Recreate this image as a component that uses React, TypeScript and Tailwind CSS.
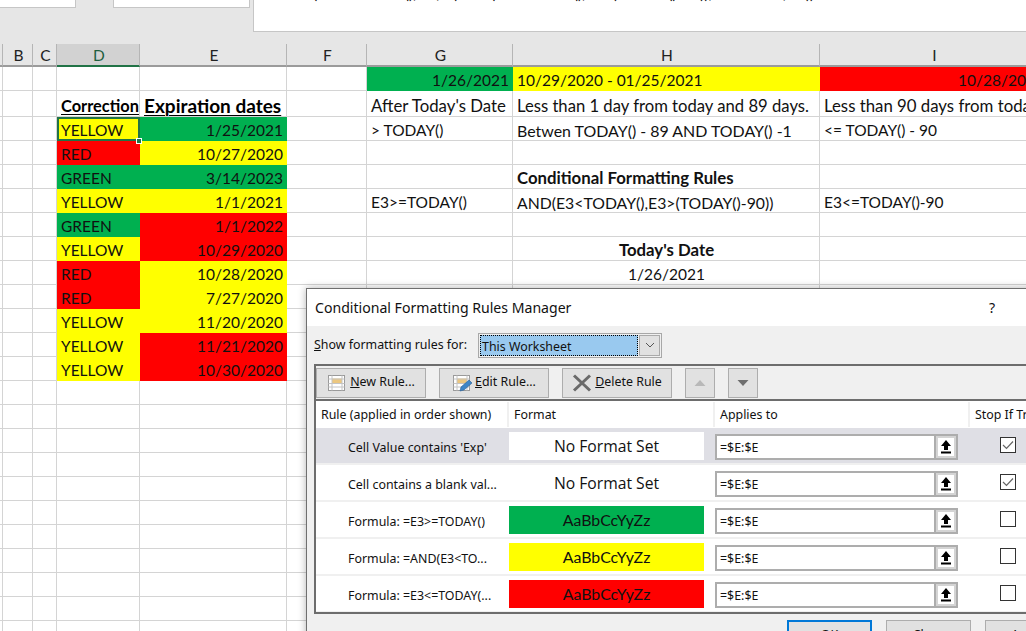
import type { ReactNode } from "react";

type Fill = "green" | "yellow" | "red" | undefined;

const fills = {
  green: "bg-[#00b050] border-transparent",
  yellow: "bg-[#ffff00] border-transparent",
  red: "bg-[#ff0000] border-transparent",
};

type CellDef = { text?: string; fill?: Fill; align?: "r" | "c"; bold?: boolean; size?: string };

// Lato runs narrower than the sheet's font on lowercase, so wordy cells get a bigger size
const wordy = "text-[16.8px]";

const sheetRows: { h: string; cells: CellDef[] }[] = [
  { h: "h-[24px]", cells: [{}, {}, { text: "1/26/2021", fill: "green", align: "r" }, { text: "10/29/2020 - 01/25/2021", fill: "yellow" }, { text: "10/28/2020", fill: "red", align: "r" }] },
  { h: "h-[26px]", cells: [{}, {}, { text: "After Today's Date", size: wordy }, { text: "Less than 1 day from today and 89 days.", size: "text-[16.65px]" }, { text: "Less than 90 days from today", size: wordy }] },
  { h: "h-[24px]", cells: [{ text: "YELLOW", fill: "yellow" }, { text: "1/25/2021", fill: "green", align: "r" }, { text: "> TODAY()" }, { text: "Betwen TODAY() - 89 AND TODAY() -1", size: "text-[15.95px]" }, { text: "<= TODAY() - 90" }] },
  { h: "h-[24px]", cells: [{ text: "RED", fill: "red" }, { text: "10/27/2020", fill: "yellow", align: "r" }, {}, {}, {}] },
  { h: "h-[24px]", cells: [{ text: "GREEN", fill: "green" }, { text: "3/14/2023", fill: "green", align: "r" }, {}, { text: "Conditional Formatting Rules", bold: true, size: wordy }, {}] },
  { h: "h-[24px]", cells: [{ text: "YELLOW", fill: "yellow" }, { text: "1/1/2021", fill: "yellow", align: "r" }, { text: "E3>=TODAY()" }, { text: "AND(E3<TODAY(),E3>(TODAY()-90))", size: "text-[15.8px]" }, { text: "E3<=TODAY()-90" }] },
  { h: "h-[24px]", cells: [{ text: "GREEN", fill: "green" }, { text: "1/1/2022", fill: "red", align: "r" }, {}, {}, {}] },
  { h: "h-[24px]", cells: [{ text: "YELLOW", fill: "yellow" }, { text: "10/29/2020", fill: "red", align: "r" }, {}, { text: "Today's Date", bold: true, align: "c", size: wordy }, {}] },
  { h: "h-[24px]", cells: [{ text: "RED", fill: "red" }, { text: "10/28/2020", fill: "yellow", align: "r" }, {}, { text: "1/26/2021", align: "c" }, {}] },
  { h: "h-[24px]", cells: [{ text: "RED", fill: "red" }, { text: "7/27/2020", fill: "yellow", align: "r" }, {}, {}, {}] },
  { h: "h-[24px]", cells: [{ text: "YELLOW", fill: "yellow" }, { text: "11/20/2020", fill: "yellow", align: "r" }, {}, {}, {}] },
  { h: "h-[24px]", cells: [{ text: "YELLOW", fill: "yellow" }, { text: "11/21/2020", fill: "red", align: "r" }, {}, {}, {}] },
  { h: "h-[24px]", cells: [{ text: "YELLOW", fill: "yellow" }, { text: "10/30/2020", fill: "red", align: "r" }, {}, {}, {}] },
  ...Array.from({ length: 11 }, () => ({ h: "h-[24px]", cells: [{}, {}, {}, {}, {}] as CellDef[] })),
];

const columnClass = "grid grid-cols-[3px_30px_24px_83px_147px_80px_146px_307px_228px] w-[1048px]";

function Head({ label, active }: { label?: string; active?: boolean }) {
  return (
    <div
      className={
        active
          ? "flex h-[23px] items-center justify-center border-b-2 border-r border-b-[#217346] border-r-[#b5b5b5] bg-[#d2d2d2] pl-[2px] pt-[2px] text-[#1f5f3f]"
          : "flex h-[23px] items-center justify-center border-b-2 border-r border-b-[#9b9b9b] border-r-[#b5b5b5] bg-[#e6e6e6] pl-[2px] pt-[2px] text-[#222]"
      }
    >
      {label}
    </div>
  );
}

function Cell({ def, h }: { def: CellDef; h: string }) {
  const pad = h === "h-[26px]" ? "pt-[6px]" : "pt-[4px]";
  const base = `flex ${h} ${pad} items-center whitespace-nowrap border-b border-r pl-[4px] pr-[3px] text-[#111] overflow-hidden`;
  const color = def.fill ? fills[def.fill] : "border-[#d4d4d4] bg-white";
  const align = def.align === "r" ? "justify-end" : def.align === "c" ? "justify-center" : "justify-start";
  return (
    <div className={`${base} ${color} ${align} ${def.bold ? "font-bold" : ""} ${def.size ?? ""}`}>
      <span>{def.text}</span>
    </div>
  );
}

function Blank({ h }: { h: string }) {
  return <div className={`${h} border-b border-r border-[#d4d4d4] bg-white`} />;
}

function Sheet() {
  return (
    <div className={`${columnClass} font-['Lato',sans-serif] text-[15.5px] leading-none`}>
      <Head />
      <Head label="B" />
      <Head label="C" />
      <Head label="D" active />
      <Head label="E" />
      <Head label="F" />
      <Head label="G" />
      <Head label="H" />
      <Head label="I" />
      {sheetRows.map((row, i) => {
        const [d, e, g, hh, ii] = row.cells;
        return (
          <div key={i} className="contents">
            <Blank h={row.h} />
            <Blank h={row.h} />
            <Blank h={row.h} />
            {i === 1 ? (
              <div className="flex h-[26px] items-end whitespace-nowrap border-b border-r border-[#d4d4d4] bg-white pb-[2px] pl-[4px] text-[16.4px] font-bold underline decoration-1 underline-offset-2">
                Correction
              </div>
            ) : i === 2 ? (
              <div className="relative h-[24px]">
                <div className="flex h-full items-center border-2 border-[#217346] bg-[#ffff00] px-[2px] pt-[3px] text-[#111]">
                  {d.text}
                </div>
                <div className="absolute bottom-[-3px] right-[-2px] h-[6px] w-[6px] border border-white bg-[#217346]" />
              </div>
            ) : (
              <Cell def={d} h={row.h} />
            )}
            {i === 1 ? (
              <div className="flex h-[26px] items-end whitespace-nowrap border-b border-r border-[#d4d4d4] bg-white pb-[1px] pl-[4px] text-[19px] font-bold underline decoration-1 underline-offset-2">
                Expiration dates
              </div>
            ) : (
              <Cell def={e} h={row.h} />
            )}
            <Blank h={row.h} />
            <Cell def={g} h={row.h} />
            <Cell def={hh} h={row.h} />
            <Cell def={ii} h={row.h} />
          </div>
        );
      })}
    </div>
  );
}

function TableIcon({ pencil }: { pencil?: boolean }) {
  return (
    <svg width="20" height="20" viewBox="0 0 20 20" className="shrink-0">
      <rect x="1.5" y="2.5" width="16" height="15" fill="#fff" stroke="#9a9a9a" />
      <rect x="5" y="5.5" width="10" height="5" fill="#ecc77f" />
      <path d="M1.5 6h16M1.5 10.5h16M1.5 14h16M5 2.5v15M15 2.5v15" stroke="#c4c4c4" fill="none" />
      {pencil && <path d="M8 18l1-4 8-7 3 3-8 7z" fill="#3f86c6" stroke="#2a5f95" strokeWidth="0.6" />}
    </svg>
  );
}

function ToolButton({ icon, children, w }: { icon: ReactNode; children: ReactNode; w: string }) {
  return (
    <button className={`flex h-[30px] ${w} items-center justify-center gap-[3px] border border-[#adadad] bg-[#e1e1e1] text-[12.4px] text-[#111]`}>
      {icon}
      <span>{children}</span>
    </button>
  );
}

function ArrowButton({ up }: { up?: boolean }) {
  return (
    <button className="flex h-[30px] w-[30px] items-center justify-center border border-[#adadad] bg-[#e1e1e1]">
      <svg width="12" height="8" viewBox="0 0 12 8">
        {up ? <path d="M6 1l5.5 6H.5z" fill="#b8b8b8" /> : <path d="M.5 1h11L6 7z" fill="#6e6e6e" />}
      </svg>
    </button>
  );
}

function UploadIcon() {
  return (
    <svg width="12" height="14" viewBox="0 0 12 14">
      <path d="M6 0l5 6H8v4H4V6H1z" fill="#000" />
      <rect x="1" y="11.5" width="10" height="2" fill="#000" />
    </svg>
  );
}

type Rule = { label: string; sample: string; fill?: string; text: string; checked: boolean; selected?: boolean };

const rules: Rule[] = [
  { label: "Cell Value contains 'Exp'", sample: "No Format Set", checked: true, selected: true, text: "pt-[2px] font-['Open_Sans',sans-serif] text-[15.7px]", fill: "bg-white" },
  { label: "Cell contains a blank val...", sample: "No Format Set", checked: true, text: "pt-[2px] font-['Open_Sans',sans-serif] text-[15.7px]", fill: "bg-white" },
  { label: "Formula: =E3>=TODAY()", sample: "AaBbCcYyZz", checked: false, text: "font-['Lato',sans-serif] text-[15.9px]", fill: "bg-[#00b050]" },
  { label: "Formula: =AND(E3<TO...", sample: "AaBbCcYyZz", checked: false, text: "font-['Lato',sans-serif] text-[15.9px]", fill: "bg-[#ffff00]" },
  { label: "Formula: =E3<=TODAY(...", sample: "AaBbCcYyZz", checked: false, text: "font-['Lato',sans-serif] text-[15.9px]", fill: "bg-[#ff0000]" },
];

const tableCols = "grid grid-cols-[193px_206px_255px_120px]";

function RuleRow({ rule }: { rule: Rule }) {
  return (
    <div className={`${tableCols} h-[37px] items-center border-b-2 border-[#f0f0f0] ${rule.selected ? "bg-[#dfdfe5]" : "bg-white"}`}>
      <div className="whitespace-nowrap pl-[32px] pt-[6px] text-[12.4px] text-[#111]">{rule.label}</div>
      <div className={`flex h-[28px] w-[195px] items-center justify-center text-[#111] ${rule.fill} ${rule.text}`}>{rule.sample}</div>
      <div className="mt-[2px] flex h-[26px] items-stretch">
        <div className="flex w-[219px] items-center border-2 border-r-0 border-[#adadad] bg-white pl-[3px] pt-[3px] text-[12.4px] text-[#111]">=$E:$E</div>
        <div className="flex w-[24px] items-center justify-center border-2 border-[#adadad] bg-white outline-[2px] -outline-offset-4 outline-[#d4d4d4]">
          <UploadIcon />
        </div>
      </div>
      <div className="mt-[-2px] pl-[30px]">
        <div className="flex h-[16px] w-[16px] items-center justify-center border border-[#333] bg-white">
          {rule.checked && (
            <svg width="12" height="10" viewBox="0 0 12 10">
              <path d="M1 5l3.5 3.5L11 1.5" fill="none" stroke="#666" strokeWidth="1.2" />
            </svg>
          )}
        </div>
      </div>
    </div>
  );
}

function RulesDialog() {
  return (
    <div className="absolute left-[306px] top-[288px] flex h-[360px] w-[740px] flex-col border-l border-t border-[#6f6f6f] bg-[#f0f0f0] font-['Noto_Sans',sans-serif] shadow-[0_0_8px_rgba(0,0,0,0.3)]">
      <div className="flex h-[37px] shrink-0 items-center justify-between bg-white pl-[8px] pr-[51px] text-[14.1px] text-[#111]">
        <span>Conditional Formatting Rules Manager</span>
        <span>?</span>
      </div>
      <div className="flex h-[38px] shrink-0 items-center pl-[7px] text-[12.4px] text-[#111]">
        <span className="w-[164px]">
          <u>S</u>how formatting rules for:
        </span>
        <div className="flex h-[25px] w-[184px] items-stretch border border-[#a8a8a8] bg-[#f0f0f0] p-[1px]">
          <div className="flex flex-1 items-center border border-dotted border-black bg-[#99c9ef] pl-[1px] pt-[5px]">This Worksheet</div>
          <div className="ml-[1px] flex w-[21px] items-center justify-center border border-[#aaa] bg-[#e1e1e1]">
            <svg width="10" height="6" viewBox="0 0 10 6">
              <path d="M1 1l4 4 4-4" fill="none" stroke="#555" />
            </svg>
          </div>
        </div>
      </div>
      <div className="ml-[7px] mr-[12px] flex h-[250px] shrink-0 flex-col border-2 border-[#6d6d6d]">
        <div className="flex h-[33px] shrink-0 items-center gap-[13px]">
          <ToolButton w="w-[110px]" icon={<TableIcon />}>
            <u>N</u>ew Rule...
          </ToolButton>
          <ToolButton w="w-[110px]" icon={<TableIcon pencil />}>
            <u>E</u>dit Rule...
          </ToolButton>
          <ToolButton
            w="w-[110px]"
            icon={
              <svg width="20" height="18" viewBox="0 0 20 18">
                <path d="M2 1.5l16 15M18 1.5l-16 15" stroke="#6a6a6a" strokeWidth="3" fill="none" />
              </svg>
            }
          >
            <u>D</u>elete Rule
          </ToolButton>
          <ArrowButton up />
          <ArrowButton />
        </div>
        <div className="flex-1 overflow-hidden border-t-2 border-[#6d6d6d] bg-white">
          <div className={`${tableCols} h-[27px] items-center text-[12.4px] text-[#111]`}>
            <div className="whitespace-nowrap border-r-2 border-[#f0f0f0] pl-[5px] leading-[25px]">Rule (applied in order shown)</div>
            <div className="border-r-2 border-[#f0f0f0] pl-[5px] leading-[25px]">Format</div>
            <div className="border-r-2 border-[#f0f0f0] pl-[5px] leading-[25px]">Applies to</div>
            <div className="whitespace-nowrap pl-[5px] leading-[25px]">Stop If True</div>
          </div>
          {rules.map((rule) => (
            <RuleRow key={rule.label} rule={rule} />
          ))}
        </div>
      </div>
      <div className="ml-[480px] mt-[6px] flex gap-[14px] text-[12.4px] text-[#111]">
        <button className="h-[30px] w-[85px] shrink-0 border-2 border-[#0078d7] bg-[#e1e1e1]">OK</button>
        <button className="h-[30px] w-[85px] shrink-0 border border-[#adadad] bg-[#e1e1e1]">Close</button>
        <button className="h-[30px] w-[85px] shrink-0 border border-[#adadad] bg-[#e1e1e1]">Apply</button>
      </div>
    </div>
  );
}

function FormulaBand() {
  return (
    <div className="flex h-[44px] items-start bg-[#e6e6e6]">
      <div className="h-[8px] w-[76px] border-b border-r border-[#c6c6c6] bg-white" />
      <div className="ml-[37px] h-[8px] w-[137px] border-x border-b border-[#c6c6c6] bg-white" />
      <div className="ml-[3px] h-[32px] flex-1 overflow-hidden border-b border-l border-[#c6c6c6] bg-white pl-[37px]">
        <div className="mt-[-15px] whitespace-nowrap font-['Lato',sans-serif] text-[15.5px] leading-[17px] text-[#111]">
          =IF(E3&gt;=TODAY(),"G",IF(AND(E3&lt;TODAY(),E3&gt;(TODAY()-90)),"YELLOW","R"))
        </div>
      </div>
    </div>
  );
}

export default function App() {
  return (
    <div className="relative h-[631px] w-[1026px] overflow-hidden bg-white">
      <FormulaBand />
      <Sheet />
      <RulesDialog />
    </div>
  );
}
